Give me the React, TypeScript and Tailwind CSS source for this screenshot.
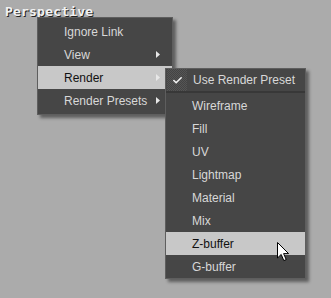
import { Check } from 'lucide-react';

const mainItems = [
    { label: 'Ignore Link', arrow: false },
    { label: 'View', arrow: true },
    { label: 'Render', arrow: true, active: true },
    { label: 'Render Presets', arrow: true },
];

const presets = ['Wireframe', 'Fill', 'UV', 'Lightmap', 'Material', 'Mix', 'Z-buffer', 'G-buffer'];

function Arrow() {
    return (
        <svg width="4" height="7" viewBox="0 0 4 7" className="shrink-0">
            <path d="M0 0 L4 3.5 L0 7 Z" fill="#e8e8e8" />
        </svg>
    );
}

function Cursor() {
    return (
        <svg width="13" height="20" viewBox="0 0 13 20" className="absolute left-[277px] top-[242px]">
            <path d="M0.5 0.5 L0.5 16 L4.2 12.4 L6.8 18.6 L9.2 17.6 L6.6 11.6 L11.6 11.6 Z" fill="#fff" stroke="#000" strokeWidth="1" strokeLinejoin="round" />
        </svg>
    );
}

export default function App() {
    return (
        <div className="relative w-[331px] h-[298px] bg-[#ababab] overflow-hidden" style={{ fontFamily: '"Liberation Sans", Arial, sans-serif' }}>
            {/* Viewport label */}
            <div
                className="absolute left-[5px] top-[2px] text-[13px] font-bold tracking-[0.2px] text-[#f2f2f2]"
                style={{ fontFamily: '"DejaVu Sans Mono", monospace', textShadow: '1px 1px 0 #222' }}
            >
                Perspective
            </div>

            {/* Main context menu */}
            <div className="absolute left-[37px] top-[17px] w-[136px] bg-[#464646] border border-[#5e5e5e] py-[2px] shadow-[3px_3px_3px_rgba(0,0,0,0.45)]">
                {mainItems.map((item) => (
                    <div
                        key={item.label}
                        className={
                            'h-[23px] flex items-center pl-[26px] pr-[12px] text-[12px] ' +
                            (item.active ? 'bg-[#c8c8c8] text-[#111]' : 'text-[#d8d8d8]')
                        }
                    >
                        <span className="flex-1">{item.label}</span>
                        {item.arrow && <Arrow />}
                    </div>
                ))}
            </div>

            {/* Render submenu */}
            <div className="absolute left-[165px] top-[68px] w-[141px] bg-[#464646] border border-[#5e5e5e] shadow-[3px_3px_3px_rgba(0,0,0,0.45)]">
                <div className="h-[24px] flex items-center text-[12px] text-[#d8d8d8] border-b-2 border-[#383838]">
                    <div
                        className="w-[20px] h-full flex items-center justify-center ml-[1px] mr-[6px]"
                        style={{ backgroundColor: '#4e4e4e', backgroundImage: 'repeating-conic-gradient(#555 0% 25%, #444 0% 50%)', backgroundSize: '2px 2px' }}
                    >
                        <Check size={11} strokeWidth={3.5} color="#f0f0f0" />
                    </div>
                    Use Render Preset
                </div>
                <div className="pt-[1px]">
                    {presets.map((p) => (
                        <div
                            key={p}
                            className={
                                'h-[23px] flex items-center pl-[26px] text-[12px] ' +
                                (p === 'Z-buffer' ? 'bg-[#c8c8c8] text-[#111]' : 'text-[#d8d8d8]')
                            }
                        >
                            {p}
                        </div>
                    ))}
                </div>
            </div>

            <Cursor />
        </div>
    );
}
